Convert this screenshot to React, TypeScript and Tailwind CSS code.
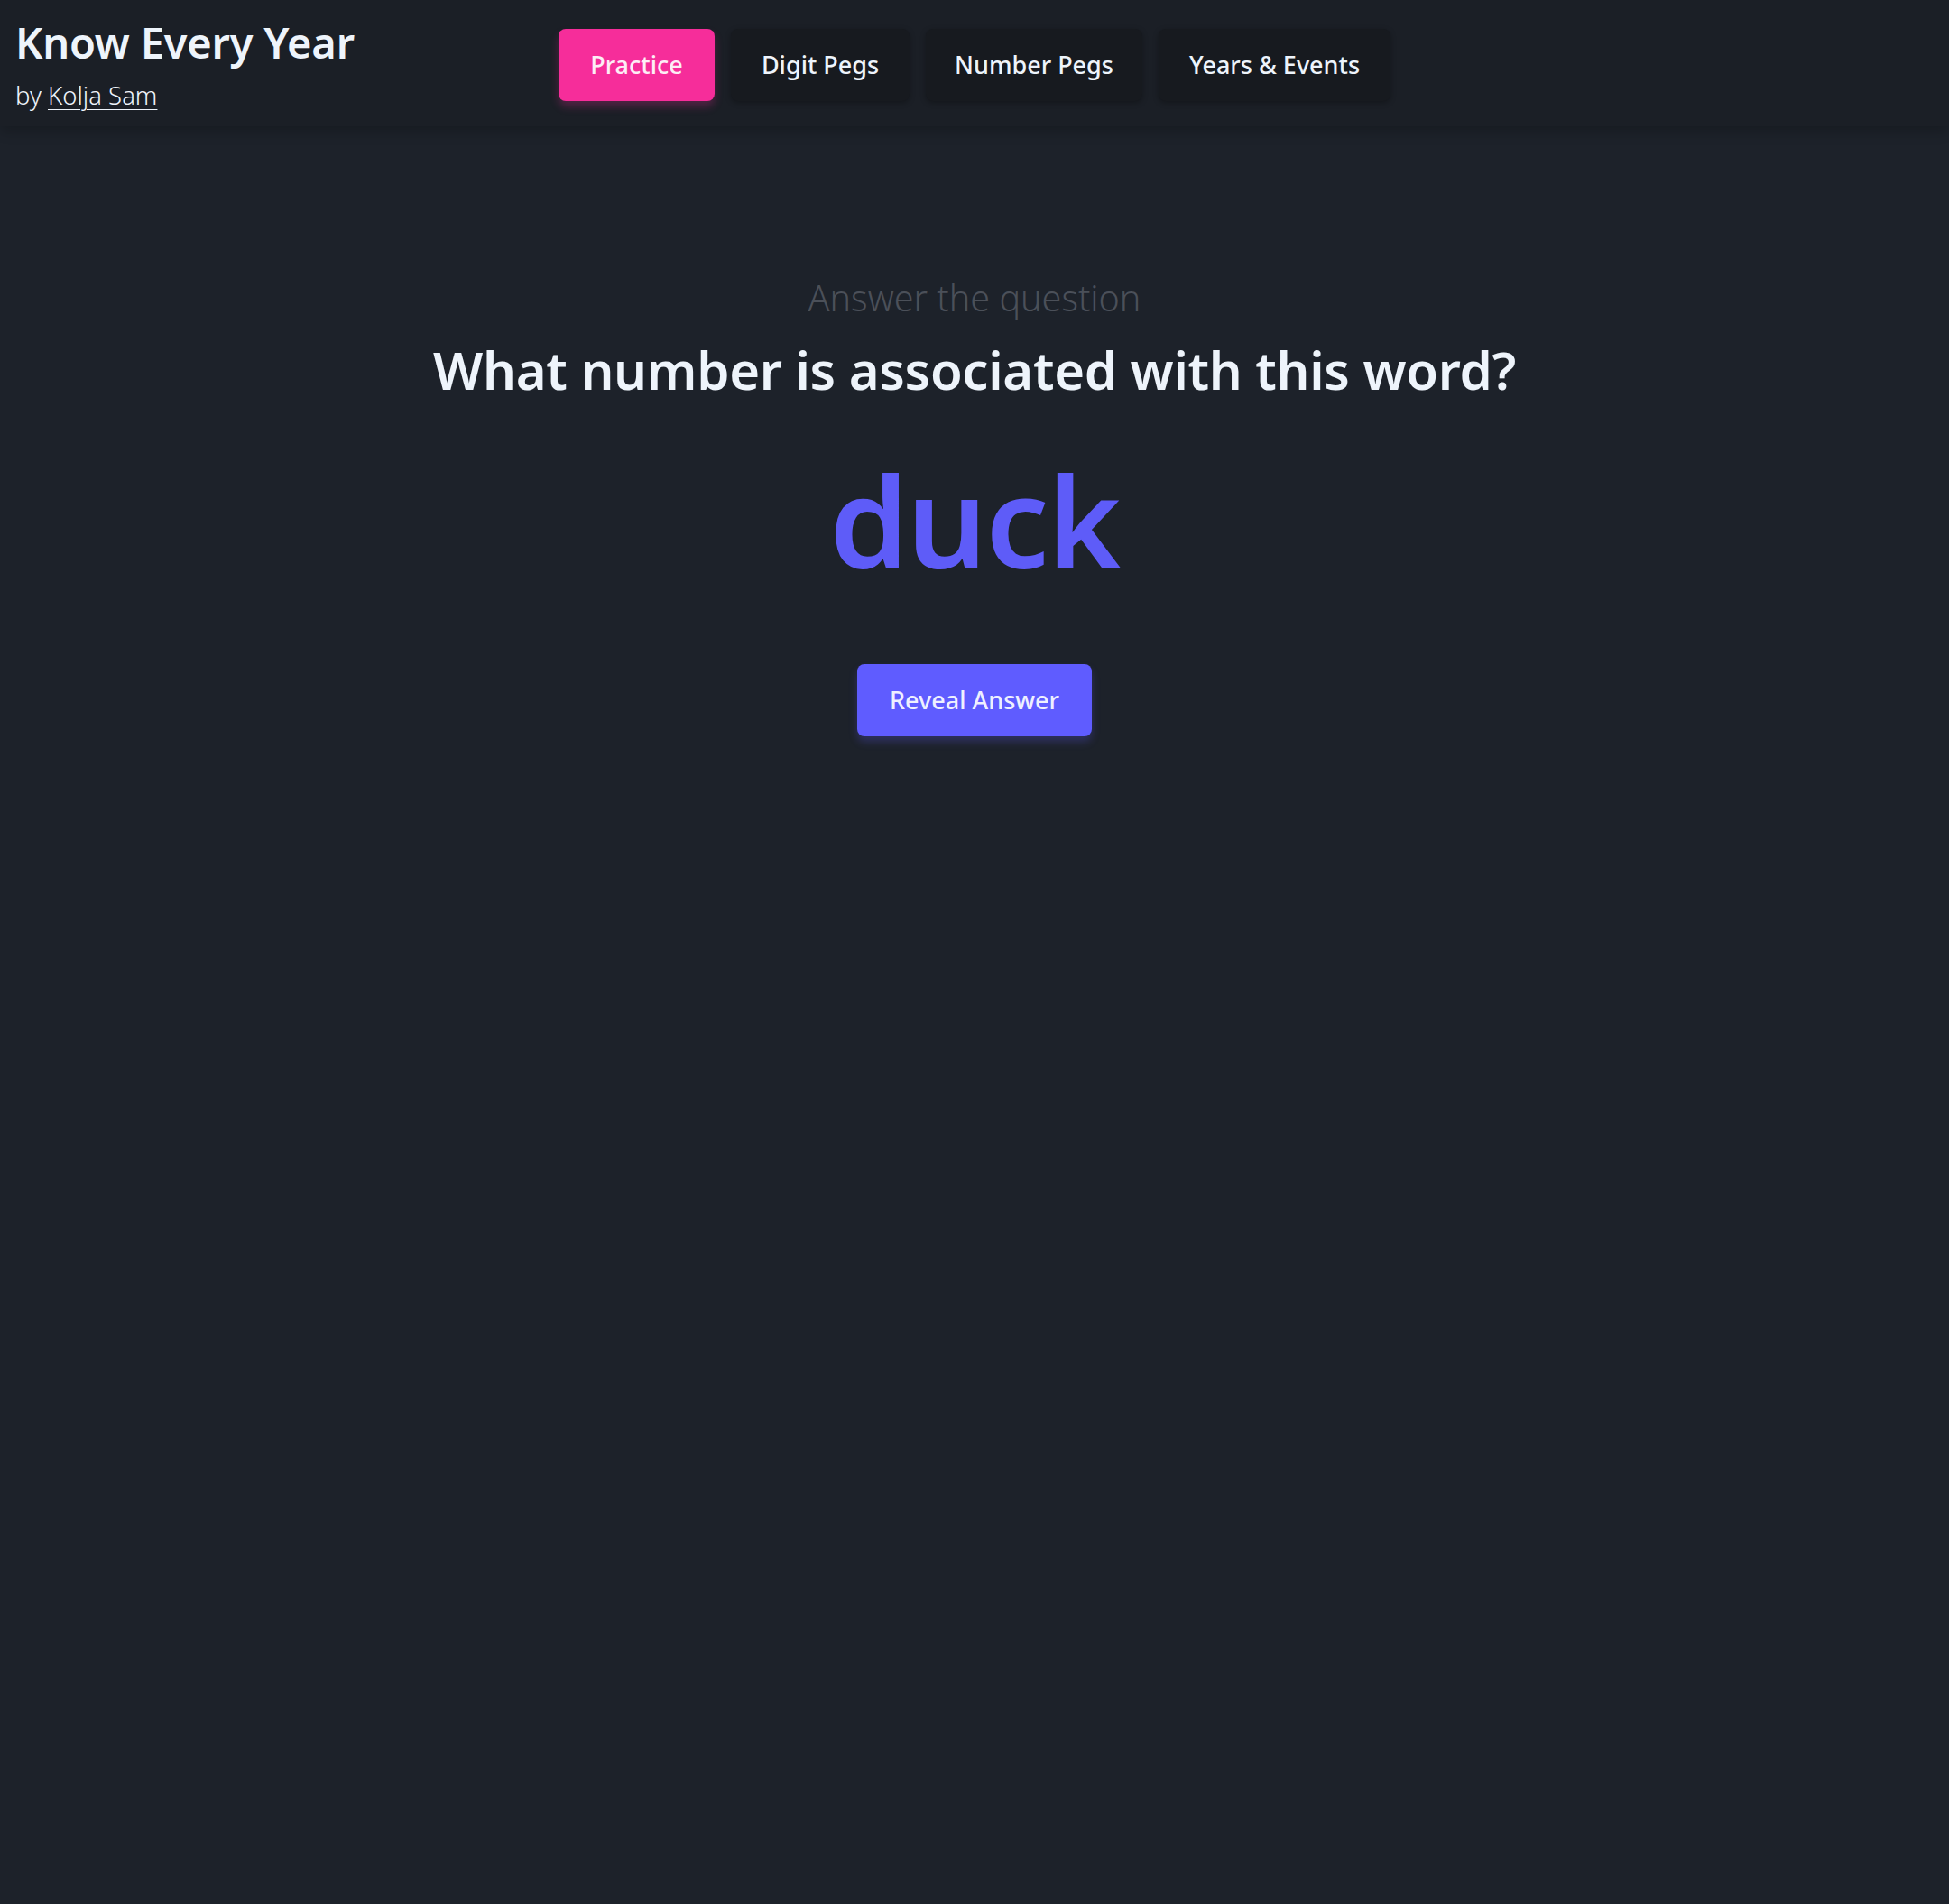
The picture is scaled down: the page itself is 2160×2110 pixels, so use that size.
import { useState } from "react";

const tabs = [
  { label: "Practice", width: "w-[173px]" },
  { label: "Digit Pegs", width: "w-[198px]" },
  { label: "Number Pegs", width: "w-[240px]" },
  { label: "Years & Events", width: "w-[257px]" },
];

export default function App() {
  const [active, setActive] = useState("Practice");
  const [revealed, setRevealed] = useState(false);

  return (
    <div
      className="min-h-[2110px] bg-[#1d222a] text-[#eef4fb]"
      style={{ fontFamily: '"Noto Sans", "Open Sans", sans-serif' }}
    >
      {/* Header */}
      <header className="relative z-10 flex h-[140px] items-start bg-[#1b1f26] px-[17px] pt-[18px] shadow-[0_6px_14px_rgba(0,0,0,0.2)]">
        <div className="w-[602px] shrink-0">
          <h1 className="text-[47px] leading-[58px] font-semibold tracking-[-0.2px]">Know Every Year</h1>
          <p className="mt-[13px] text-[27.5px] leading-[34px] font-light">
            by{" "}
            <a href="#" className="underline decoration-1 underline-offset-[5px]">
              Kolja Sam
            </a>
          </p>
        </div>
        <nav className="mt-[14px] flex gap-[18px]">
          {tabs.map((tab) =>
            tab.label === active ? (
              <button
                key={tab.label}
                onClick={() => setActive(tab.label)}
                className={`${tab.width} h-[80px] rounded-[8px] bg-[#f62d9a] text-[27px] font-medium text-[#fdeef6] shadow-[0_6px_10px_rgba(246,45,154,0.25)]`}
              >
                {tab.label}
              </button>
            ) : (
              <button
                key={tab.label}
                onClick={() => setActive(tab.label)}
                className={`${tab.width} h-[80px] rounded-[8px] bg-[#171a1f] text-[27px] font-medium text-[#eef4fb] shadow-[0_2px_6px_rgba(0,0,0,0.3)]`}
              >
                {tab.label}
              </button>
            )
          )}
        </nav>
      </header>

      {/* Question */}
      <main className="flex flex-col items-center pt-[167px] text-center">
        <p className="text-[39.5px] leading-[46px] font-light text-[#4b5059]">Answer the question</p>
        <h2 className="mt-[19px] text-[58px] leading-[76px] font-semibold tracking-[-0.3px]">
          What number is associated with this word?
        </h2>
        <div className="mt-[50px] text-[140px] leading-[156px] font-semibold text-[#5e5cf8] tracking-[-2px]">
          duck
        </div>
        {revealed ? (
          <div className="mt-[82px] text-[40px] leading-[80px] font-semibold text-[#f62d9a]">27</div>
        ) : (
          <button
            onClick={() => setRevealed(true)}
            className="mt-[82px] h-[80px] w-[260px] rounded-[8px] bg-[#5f5cff] text-[27px] font-medium text-[#eef0ff] shadow-[0_6px_10px_rgba(95,92,255,0.25)]"
          >
            Reveal Answer
          </button>
        )}
      </main>
    </div>
  );
}
